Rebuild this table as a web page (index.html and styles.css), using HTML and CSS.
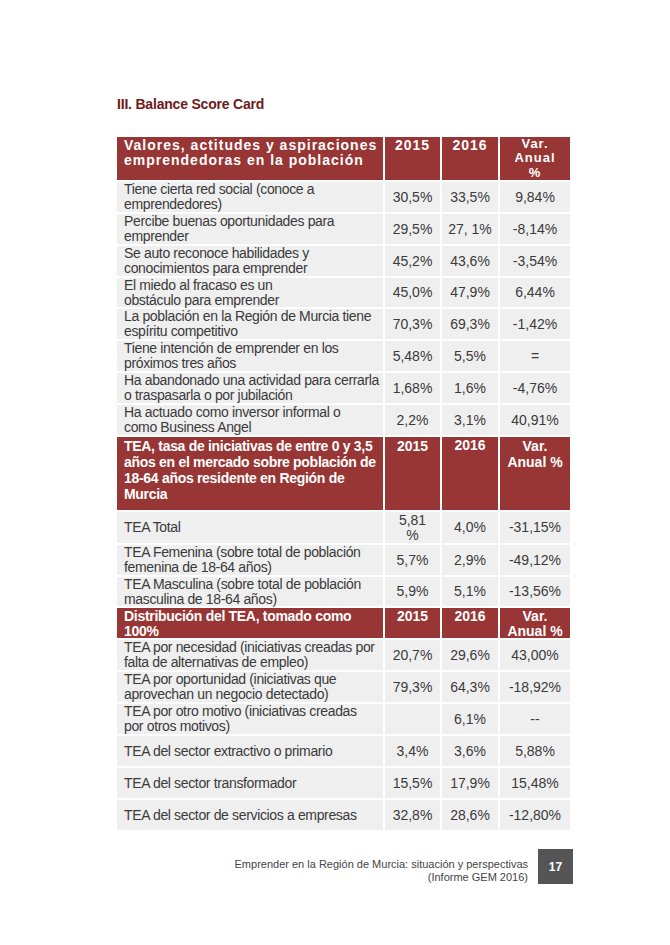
FILE: index.html
```html
<!DOCTYPE html>
<html lang="es">
<head>
<meta charset="utf-8">
<title>Balance Score Card</title>
<link rel="stylesheet" href="styles.css">
</head>
<body>
<div class="page">
  <h1 class="title">III. Balance Score Card</h1>
  <table class="bsc">
    <colgroup>
      <col class="c-label"><col class="c-num"><col class="c-num2"><col class="c-var">
    </colgroup>
    <tbody>
    <tr class="head h1">
      <th class="lbl spaced">Valores, actitudes y aspiraciones emprendedoras en la población</th>
      <th class="spaced">2015</th><th class="spaced">2016</th><th class="spaced var3">Var.<br>Anual<br>%</th>
    </tr>
    <tr><td class="lbl">Tiene cierta red social (conoce a<br>emprendedores)</td><td>30,5%</td><td>33,5%</td><td>9,84%</td></tr>
    <tr><td class="lbl">Percibe buenas oportunidades para<br>emprender</td><td>29,5%</td><td>27, 1%</td><td>-8,14%</td></tr>
    <tr><td class="lbl">Se auto reconoce habilidades y<br>conocimientos para emprender</td><td>45,2%</td><td>43,6%</td><td>-3,54%</td></tr>
    <tr class="tight"><td class="lbl">El miedo al fracaso es un<br>obstáculo para emprender</td><td>45,0%</td><td>47,9%</td><td>6,44%</td></tr>
    <tr><td class="lbl">La población en la Región de Murcia tiene<br>espíritu competitivo</td><td>70,3%</td><td>69,3%</td><td>-1,42%</td></tr>
    <tr><td class="lbl">Tiene intención de emprender en los<br>próximos tres años</td><td>5,48%</td><td>5,5%</td><td>=</td></tr>
    <tr><td class="lbl">Ha abandonado una actividad para cerrarla<br>o traspasarla o por jubilación</td><td>1,68%</td><td>1,6%</td><td>-4,76%</td></tr>
    <tr><td class="lbl">Ha actuado como inversor informal o<br>como Business Angel</td><td>2,2%</td><td>3,1%</td><td>40,91%</td></tr>
    </tbody>
    <tbody>
    <tr class="head h2">
      <th class="lbl">TEA, tasa de iniciativas de entre 0 y 3,5 años en el mercado sobre población de 18-64 años residente en Región de Murcia</th>
      <th>2015</th><th class="up">2016</th><th>Var.<br>Anual %</th>
    </tr>
    <tr><td class="lbl">TEA Total</td><td class="wrap">5,81<br>%</td><td>4,0%</td><td>-31,15%</td></tr>
    <tr><td class="lbl">TEA Femenina (sobre total de población<br>femenina de 18-64 años)</td><td>5,7%</td><td>2,9%</td><td>-49,12%</td></tr>
    <tr class="tight"><td class="lbl">TEA Masculina (sobre total de población<br>masculina de 18-64 años)</td><td>5,9%</td><td>5,1%</td><td>-13,56%</td></tr>
    </tbody>
    <tbody>
    <tr class="head h3">
      <th class="lbl">Distribución del TEA, tomado como 100%</th>
      <th>2015</th><th>2016</th><th>Var.<br>Anual %</th>
    </tr>
    <tr><td class="lbl">TEA por necesidad (iniciativas creadas por<br>falta de alternativas de empleo)</td><td>20,7%</td><td>29,6%</td><td>43,00%</td></tr>
    <tr><td class="lbl">TEA por oportunidad (iniciativas que<br>aprovechan un negocio detectado)</td><td>79,3%</td><td>64,3%</td><td>-18,92%</td></tr>
    <tr><td class="lbl">TEA por otro motivo (iniciativas creadas<br>por otros motivos)</td><td></td><td>6,1%</td><td>--</td></tr>
    <tr><td class="lbl">TEA del sector extractivo o primario</td><td>3,4%</td><td>3,6%</td><td>5,88%</td></tr>
    <tr><td class="lbl">TEA del sector transformador</td><td>15,5%</td><td>17,9%</td><td>15,48%</td></tr>
    <tr><td class="lbl">TEA del sector de servicios a empresas</td><td>32,8%</td><td>28,6%</td><td>-12,80%</td></tr>
    </tbody>
  </table>
  <footer class="foot">
    <p class="foot-text">Emprender en la Región de Murcia: situación y perspectivas<br>(Informe GEM 2016)</p>
    <div class="pagenum">17</div>
  </footer>
</div>
</body>
</html>
```
FILE: styles.css
```css
html, body {
  margin: 0;
  padding: 0;
  background: #ffffff;
}
.page {
  width: 670px;
  height: 945px;
  position: relative;
  font-family: "Liberation Sans", Arial, sans-serif;
  color: #333333;
}
.title {
  margin: 0;
  padding: 96px 0 0 117px;
  font-size: 14px;
  line-height: 17px;
  font-weight: bold;
  color: #6e1a1a;
  letter-spacing: -0.2px;
}
.bsc {
  margin: 22px 0 0 115px;
  border-collapse: separate;
  border-spacing: 2px;
  table-layout: fixed;
  width: 457px;
  font-size: 14px;
  line-height: 15px;
}
.c-label { width: 266px; }
.c-num { width: 55px; }
.c-num2 { width: 56px; }
.c-var { width: 70px; }
td {
  background: #efefef;
  text-align: center;
  vertical-align: middle;
  padding: 0 2px;
  height: 30px;
  color: #3a3a3a;
  box-sizing: border-box;
  white-space: nowrap;
}
.tight td {
  height: 29px;
  line-height: 14.5px;
}
td.lbl {
  text-align: left;
  padding: 0 1px 0 7px;
  letter-spacing: -0.35px;
}
td.wrap {
  padding-top: 1px;
}
th {
  background: #983535;
  color: #ffffff;
  font-weight: bold;
  text-align: center;
  vertical-align: top;
  padding: 1px 2px 0;
  box-sizing: border-box;
}
th.lbl {
  text-align: left;
  padding-left: 7px;
  padding-right: 1px;
  letter-spacing: -0.3px;
}
th.spaced, th.lbl.spaced {
  letter-spacing: 1px;
}
.h1 th { height: 43px; line-height: 15px; padding-top: 1px; }
.h1 th.var3 { font-size: 13px; line-height: 14.3px; padding-top: 0; }
.h2 th { height: 73px; line-height: 16px; padding-top: 1px; }
.h2 th.up { padding-top: 0; }
.h3 th { height: 29px; line-height: 14.5px; }
.foot {
  position: absolute;
  left: 0;
  top: 849px;
  width: 573px;
  display: flex;
  justify-content: flex-end;
  align-items: flex-start;
  gap: 10px;
}
.foot-text {
  margin: 9px 0 0;
  text-align: right;
  font-size: 11px;
  line-height: 13px;
  color: #444444;
  font-weight: normal;
}
.pagenum {
  width: 35px;
  height: 35px;
  background: #555555;
  color: #ffffff;
  font-size: 12px;
  font-weight: bold;
  display: flex;
  align-items: center;
  justify-content: center;
}
```
